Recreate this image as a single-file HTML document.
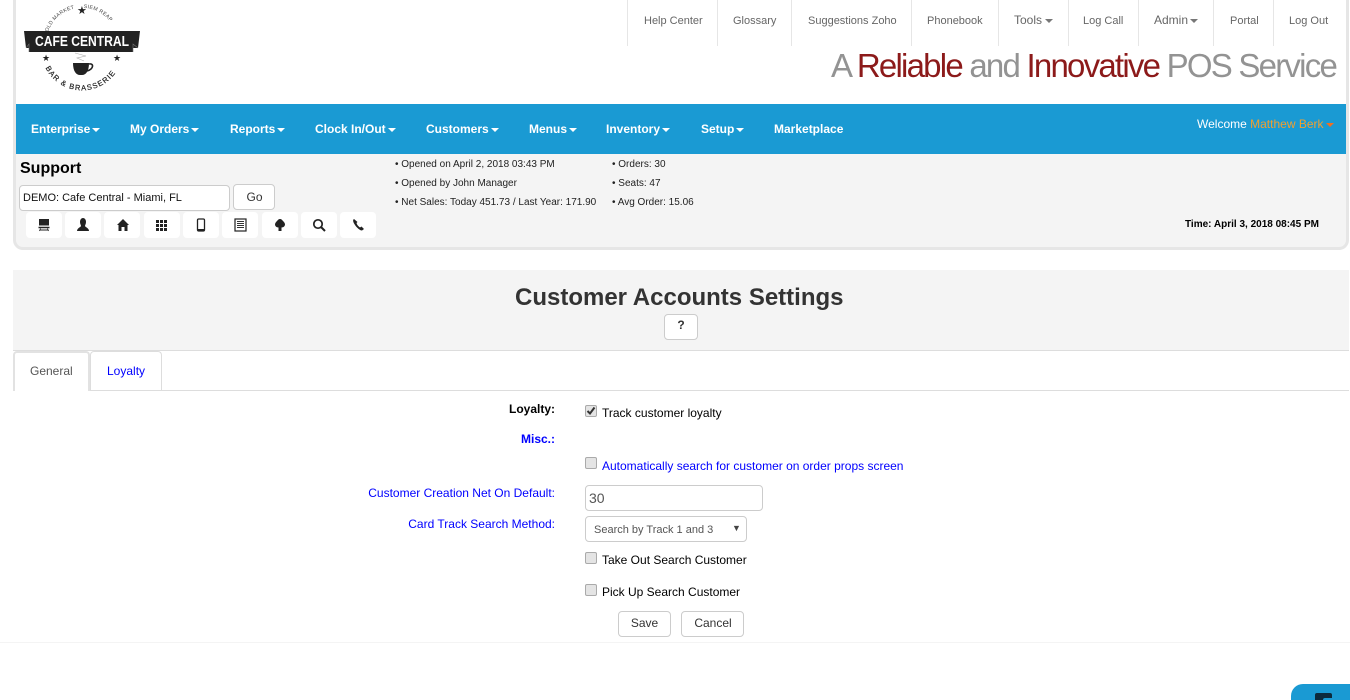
<!DOCTYPE html>
<html><head><meta charset="utf-8">
<style>
html,body{margin:0;padding:0;background:#fff;width:1350px;height:700px;overflow:hidden}
body{font-family:"Liberation Sans",sans-serif;font-size:12px;color:#000;position:relative}
.a{position:absolute;white-space:nowrap;line-height:16px}
.top{color:#666;font-size:11px;top:13px}
.sep{position:absolute;top:0;width:1px;height:46px;background:#e6e6e6}
.nav{color:#fff;font-weight:bold;font-size:12px;top:121px}
.car{display:inline-block;width:0;height:0;border-top:4px solid currentColor;border-left:4px solid transparent;border-right:4px solid transparent;vertical-align:middle;margin-left:2px}
.info{font-size:10px;color:#222}
.ib{position:absolute;top:212px;width:36px;height:26px;background:#fff;border-radius:4px}
.ib svg{position:absolute;left:11px;top:6px}
.btn{position:absolute;background:#fff;border:1px solid #ccc;border-radius:4px;box-sizing:border-box;text-align:center;color:#333;font-size:12px}
.cb{position:absolute;left:585px;width:12px;height:12px;box-sizing:border-box;background:#e4e4e4;border:1px solid #aaa;border-radius:2px}
.lbl{right:795px;font-size:12px}
.blue{color:#00f}
</style></head><body>
<!-- frame -->
<div style="position:absolute;left:13px;top:-5px;width:1336px;height:255px;box-sizing:border-box;border:3px solid #e6e6e6;border-top:0;border-radius:0 0 10px 10px;background:#f4f4f4"></div>
<div style="position:absolute;left:16px;top:0;width:1330px;height:104px;background:#fff"></div>
<div style="position:absolute;left:16px;top:104px;width:1330px;height:50px;background:#1a9ad3"></div>

<!-- logo -->
<svg style="position:absolute;left:20px;top:4px" width="124" height="92" viewBox="0 0 124 92">
<defs><path id="arcT" d="M28 28 A36 36 0 0 1 96 28"/><path id="arcB" d="M25 63 A41 41 0 0 0 99 63"/></defs>
<text font-family="Liberation Sans" font-size="5.200" fill="#444" letter-spacing=".3"><textPath href="#arcT" startOffset="0">OLD MARKET</textPath></text>
<text font-family="Liberation Sans" font-size="5.200" fill="#444" letter-spacing=".3"><textPath href="#arcT" startOffset="46">SIEM REAP</textPath></text>
<text x="57" y="10" font-family="DejaVu Sans" font-size="11" fill="#222">★</text>
<path d="M4 27H120L118 44H113V48H9V44H6Z" fill="#222"/>
<path d="M6 44L9 40V48M118 44L113 40V48" stroke="#777" stroke-width=".6" fill="none"/>
<text x="62" y="42" text-anchor="middle" font-family="Liberation Sans" font-weight="bold" font-size="14.500" fill="#fff" textLength="94" lengthAdjust="spacingAndGlyphs">CAFE CENTRAL</text>
<text x="22" y="57" font-family="DejaVu Sans" font-size="9" fill="#222">★</text>
<text x="93" y="57" font-family="DejaVu Sans" font-size="9" fill="#222">★</text>
<path d="M53 59H69C69 67 66 71 62 71H60C56 71 53 67 53 59Z" fill="#222"/>
<path d="M69 60C74 59 74 65 67 67" stroke="#222" stroke-width="1.600" fill="none"/>
<path d="M55 49L66 52 57 54 64 57" stroke="#aaa" stroke-width=".6" fill="none"/>
<text font-family="Liberation Sans" font-size="7.500" fill="#222" letter-spacing="1.150" stroke="#222" stroke-width=".2"><textPath href="#arcB" startOffset="1">BAR &amp; BRASSERIE</textPath></text>
</svg>

<!-- top links -->
<div class="sep" style="left:627px"></div><div class="sep" style="left:717px"></div><div class="sep" style="left:791px"></div><div class="sep" style="left:911px"></div><div class="sep" style="left:998px"></div><div class="sep" style="left:1068px"></div><div class="sep" style="left:1138px"></div><div class="sep" style="left:1213px"></div><div class="sep" style="left:1273px"></div>
<div class="a top" style="left:644px">Help Center</div>
<div class="a top" style="left:733px">Glossary</div>
<div class="a top" style="left:808px">Suggestions Zoho</div>
<div class="a top" style="left:927px">Phonebook</div>
<div class="a top" style="left:1014px;font-size:12px;top:12px">Tools<span class="car" style="margin-left:3px;color:#777"></span></div>
<div class="a top" style="left:1083px">Log Call</div>
<div class="a top" style="left:1154px;font-size:12px;top:12px">Admin<span class="car" style="color:#777"></span></div>
<div class="a top" style="left:1230px">Portal</div>
<div class="a top" style="left:1289px">Log Out</div>

<div class="a" style="left:831px;top:46px;font-size:33px;line-height:40px;letter-spacing:-1.77px;color:#939393">A <span style="color:#8c1a1a">Reliable</span> and <span style="color:#8c1a1a">Innovative</span> POS Service</div>

<!-- nav -->
<div class="a nav" style="left:31px">Enterprise<span class="car"></span></div>
<div class="a nav" style="left:130px">My Orders<span class="car"></span></div>
<div class="a nav" style="left:230px">Reports<span class="car"></span></div>
<div class="a nav" style="left:315px">Clock In/Out<span class="car"></span></div>
<div class="a nav" style="left:426px">Customers<span class="car"></span></div>
<div class="a nav" style="left:529px">Menus<span class="car"></span></div>
<div class="a nav" style="left:606px">Inventory<span class="car"></span></div>
<div class="a nav" style="left:701px">Setup<span class="car"></span></div>
<div class="a nav" style="left:774px">Marketplace</div>
<div class="a" style="left:1197px;top:116px;color:#fff">Welcome <span style="color:#f0a030">Matthew Berk</span><span class="car" style="color:#f26f21"></span></div>

<!-- support -->
<div class="a" style="left:20px;top:160px;font-size:16px;font-weight:bold;line-height:18px">Support</div>
<div style="position:absolute;left:19px;top:185px;width:211px;height:26px;box-sizing:border-box;background:#fff;border:1px solid #ccc;border-radius:4px;font-size:11px;line-height:24px;padding-left:3px;color:#111">DEMO: Cafe Central - Miami, FL</div>
<div class="btn" style="left:233px;top:184px;width:42px;height:26px;line-height:24px;padding-left:1px">Go</div>

<div class="ib" style="left:26px"><svg width="14" height="14" viewBox="0 0 14 14"><path d="M2 1H12V7.500H2Z" fill="#222"/><path d="M1.500 9.500H12.500" stroke="#222" stroke-width="1.500"/><path d="M3.500 10.500L2.500 13M10.500 10.500L11.500 13M3 12H11" stroke="#222" stroke-width=".9" fill="none"/></svg></div>
<div class="ib" style="left:65px"><svg width="14" height="14" viewBox="0 0 14 14"><path d="M7 0C9 0 10 2 10 4C10 6 9 7 9 8C9 9 13 10 13 13H1C1 10 5 9 5 8C5 7 4 6 4 4C4 2 5 0 7 0Z" fill="#222"/></svg></div>
<div class="ib" style="left:104px"><svg width="14" height="14" viewBox="0 0 14 14"><path d="M8 1L14 7H12.500V13H9.500V9H6.500V13H3.500V7H2Z" fill="#222"/></svg></div>
<div class="ib" style="left:144px"><svg width="14" height="14" viewBox="0 0 14 14"><path d="M1 2h3v3H1zM5 2h3v3H5zM9 2h3v3H9zM1 6h3v3H1zM5 6h3v3H5zM9 6h3v3H9zM1 10h3v3H1zM5 10h3v3H5zM9 10h3v3H9z" fill="#222"/></svg></div>
<div class="ib" style="left:183px"><svg width="14" height="14" viewBox="0 0 14 14"><rect x="3.500" y="1" width="7" height="12" rx="1.200" fill="none" stroke="#222" stroke-width="1.300"/><path d="M4 11H10V13H4Z" fill="#222"/></svg></div>
<div class="ib" style="left:222px"><svg width="14" height="14" viewBox="0 0 14 14"><rect x="2" y="1" width="11" height="12" fill="#fff" stroke="#222" stroke-width="1.200"/><path d="M4 3.500H11M4 5.500H11M4 7.500H11M4 9.500H11" stroke="#333"/></svg></div>
<div class="ib" style="left:262px"><svg width="14" height="14" viewBox="0 0 14 14"><path d="M7 1C8.500 1 9 2 10 3C11 4 12 5 12 6.500C12 8 10.500 9.500 8.500 9.500V13H5.500V9.500C3.500 9.500 2 8 2 6.500C2 5 3 4 4 3C5 2 5.500 1 7 1Z" fill="#222"/></svg></div>
<div class="ib" style="left:301px"><svg width="14" height="14" viewBox="0 0 14 14"><circle cx="6" cy="6" r="4.200" fill="none" stroke="#222" stroke-width="1.700"/><path d="M9 9L13 13" stroke="#222" stroke-width="2"/></svg></div>
<div class="ib" style="left:340px"><svg width="14" height="14" viewBox="0 0 14 14"><path d="M3 1C1.500 2 2 4 4 7C6 10 9 12.500 11 12.500L13 11 10.500 8.500 9 9.500C7.500 8.500 6 7 5.500 5L6.500 4Z" fill="#222"/></svg></div>

<div class="a info" style="left:395px;top:157px">• Opened on April 2, 2018 03:43 PM</div>
<div class="a info" style="left:395px;top:176px">• Opened by John Manager</div>
<div class="a info" style="left:395px;top:195px">• Net Sales: Today 451.73 / Last Year: 171.90</div>
<div class="a info" style="left:612px;top:157px">• Orders: 30</div>
<div class="a info" style="left:612px;top:176px">• Seats: 47</div>
<div class="a info" style="left:612px;top:195px">• Avg Order: 15.06</div>
<div class="a" style="left:1185px;top:217px;font-size:10px;font-weight:bold">Time: April 3, 2018 08:45 PM</div>

<!-- heading -->
<div style="position:absolute;left:13px;top:270px;width:1336px;height:80px;background:#f4f4f4;border-bottom:1px solid #ddd"></div>
<div class="a" style="left:515px;top:284px;font-size:24px;font-weight:bold;line-height:28px;color:#333">Customer Accounts Settings</div>
<div class="btn" style="left:664px;top:314px;width:34px;height:26px;line-height:21px;font-weight:bold;font-size:12px">?</div>

<!-- tabs -->
<div style="position:absolute;left:13px;top:390px;width:1336px;height:1px;background:#ddd"></div>
<div style="position:absolute;left:13px;top:351px;width:77px;height:40px;box-sizing:border-box;background:#fff;border:2px solid #e2e2e2;border-bottom:0;border-radius:4px 4px 0 0"></div>
<div class="a" style="left:30px;top:363px;color:#555">General</div>
<div style="position:absolute;left:90px;top:351px;width:72px;height:39px;box-sizing:border-box;background:#fff;border:1px solid #ddd;border-bottom:0;border-radius:4px 4px 0 0"></div>
<div class="a blue" style="left:107px;top:363px">Loyalty</div>

<!-- form -->
<div class="a lbl" style="top:401px;font-weight:bold">Loyalty:</div>
<div class="cb" style="top:405px"></div>
<svg style="position:absolute;left:585px;top:405px" width="12" height="12" viewBox="0 0 12 12"><path d="M2.500 6L5 8.500 9.500 2.500" fill="none" stroke="#333" stroke-width="2"/></svg>
<div class="a" style="left:602px;top:405px">Track customer loyalty</div>
<div class="a lbl blue" style="top:431px;font-weight:bold">Misc.:</div>
<div class="cb" style="top:457px"></div>
<div class="a blue" style="left:602px;top:458px">Automatically search for customer on order props screen</div>
<div class="a lbl blue" style="top:485px">Customer Creation Net On Default:</div>
<div style="position:absolute;left:585px;top:485px;width:178px;height:26px;box-sizing:border-box;border:1px solid #ccc;border-radius:4px;background:#fff;font-size:14px;line-height:24px;padding-left:3px;color:#555">30</div>
<div class="a lbl blue" style="top:516px">Card Track Search Method:</div>
<div style="position:absolute;left:585px;top:516px;width:162px;height:26px;box-sizing:border-box;border:1px solid #ccc;border-radius:4px;background:#fff;font-size:11px;line-height:26px;padding-left:8px;color:#555">Search by Track 1 and 3</div>
<div class="a" style="left:732px;top:520px;font-size:9px;color:#444">▼</div>
<div class="cb" style="top:552px"></div>
<div class="a" style="left:602px;top:552px">Take Out Search Customer</div>
<div class="cb" style="top:584px"></div>
<div class="a" style="left:602px;top:584px">Pick Up Search Customer</div>
<div class="btn" style="left:618px;top:611px;width:53px;height:26px;line-height:22px">Save</div>
<div class="btn" style="left:681px;top:611px;width:63px;height:26px;line-height:22px;padding-left:1px">Cancel</div>
<div style="position:absolute;left:0;top:642px;width:1350px;height:1px;background:#f4f4f4"></div>

<!-- chat widget -->
<div style="position:absolute;left:1291px;top:684px;width:59px;height:16px;background:#1a9ad3;border-radius:12px 0 0 0;overflow:hidden">
<div style="position:absolute;left:24px;top:9px;width:17px;height:10px;background:#0c2a3c;border-radius:2px"></div>
<div style="position:absolute;left:32px;top:14px;width:16px;height:6px;background:#1a9ad3;border-radius:2px"></div>
</div>
</body></html>
